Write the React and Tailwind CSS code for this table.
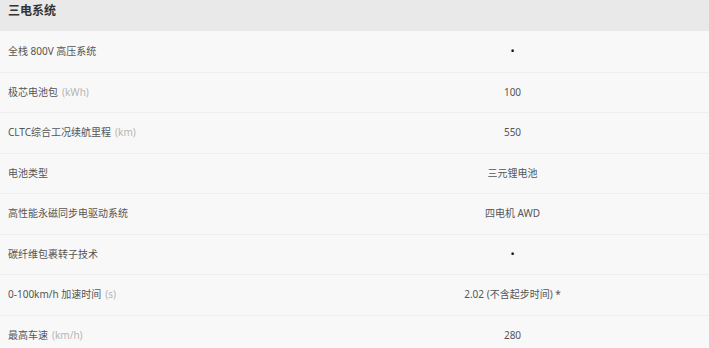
const rows = [
  { label: "全栈 800V 高压系统", value: "•", dot: true },
  { label: "极芯电池包", unit: "(kWh)", value: "100" },
  { label: "CLTC综合工况续航里程", unit: "(km)", value: "550" },
  { label: "电池类型", value: "三元锂电池" },
  { label: "高性能永磁同步电驱动系统", value: "四电机 AWD" },
  { label: "碳纤维包裹转子技术", value: "•", dot: true },
  { label: "0-100km/h 加速时间", unit: "(s)", value: "2.02 (不含起步时间) *" },
  { label: "最高车速", unit: "(km/h)", value: "280" },
];

function App() {
  return (
    <div
      className="w-[709px] h-[348px] overflow-hidden bg-[#f8f8f8]"
      style={{ fontFamily: '"Noto Sans", "Noto Sans CJK SC", sans-serif' }}
    >
      {/* Section header */}
      <div className="h-[31px] bg-[#e9e9e9] px-2 pt-[2px] text-[12px] font-bold text-[#333]">
        三电系统
      </div>

      {rows.map((r, i) => (
        <div
          key={i}
          className={
            "h-[40.5px] flex items-center text-[10px] text-[#555] " +
            (i > 0 ? "border-t border-[#eeeeee]" : "")
          }
        >
          <div className="w-[316px] pl-2">
            {r.label}
            {r.unit && <span className="ml-1 text-[#b5b5b5]">{r.unit}</span>}
          </div>
          <div className="flex-1 text-center">
            {r.dot ? <span className="text-[#111] text-[11px]">•</span> : r.value}
          </div>
        </div>
      ))}
    </div>
  );
}

export default App;
